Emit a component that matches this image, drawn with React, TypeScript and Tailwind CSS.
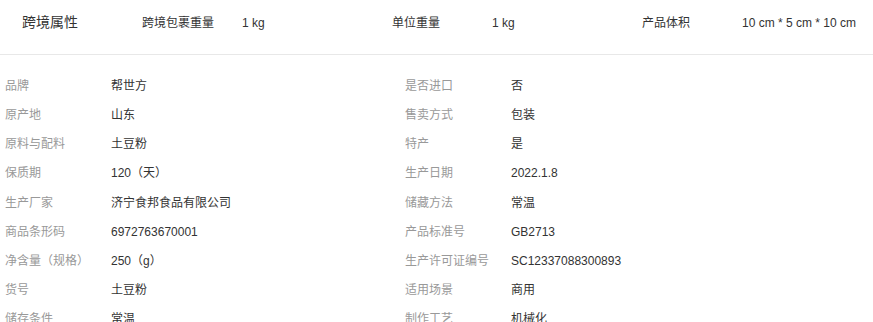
import React from 'react';

const header = [
    { label: '跨境包裹重量', value: '1 kg' },
    { label: '单位重量', value: '1 kg' },
    { label: '产品体积', value: '10 cm * 5 cm * 10 cm' },
];

const rows: [string, string, string, string][] = [
    ['品牌', '帮世方', '是否进口', '否'],
    ['原产地', '山东', '售卖方式', '包装'],
    ['原料与配料', '土豆粉', '特产', '是'],
    ['保质期', '120（天）', '生产日期', '2022.1.8'],
    ['生产厂家', '济宁食邦食品有限公司', '储藏方法', '常温'],
    ['商品条形码', '6972763670001', '产品标准号', 'GB2713'],
    ['净含量（规格）', '250（g）', '生产许可证编号', 'SC12337088300893'],
    ['货号', '土豆粉', '适用场景', '商用'],
    ['储存条件', '常温', '制作工艺', '机械化'],
];

const Cell: React.FC<{ label: string; value: string }> = ({ label, value }) => (
    <div className="flex items-center w-[400px] shrink-0 pl-[5px]">
        <span className="w-[106px] shrink-0 text-[#999]">{label}</span>
        <span className="text-[#333]">{value}</span>
    </div>
);

const App: React.FC = () => {
    return (
        <div
            className="w-[873px] h-[322px] overflow-hidden bg-white text-[12px]"
            style={{ fontFamily: '"Liberation Sans", "Noto Sans CJK SC", sans-serif' }}
        >
            <div className="border-b border-[#e8e8e8] pb-[9px]">
                <div className="flex items-center h-[45px] text-[#333] overflow-hidden">
                    <div className="w-[142px] shrink-0 pl-[22px] text-[14px]">跨境属性</div>
                    {header.map((h) => (
                        <div key={h.label} className="flex w-[250px] shrink-0">
                            <span className="w-[100px] shrink-0">{h.label}</span>
                            <span className="whitespace-nowrap">{h.value}</span>
                        </div>
                    ))}
                </div>
            </div>
            <div className="pt-[17px]">
                {rows.map((r) => (
                    <div key={r[0]} className="flex h-[29.15px] leading-[29px]">
                        <Cell label={r[0]} value={r[1]} />
                        <Cell label={r[2]} value={r[3]} />
                    </div>
                ))}
            </div>
        </div>
    );
};

export default App;
